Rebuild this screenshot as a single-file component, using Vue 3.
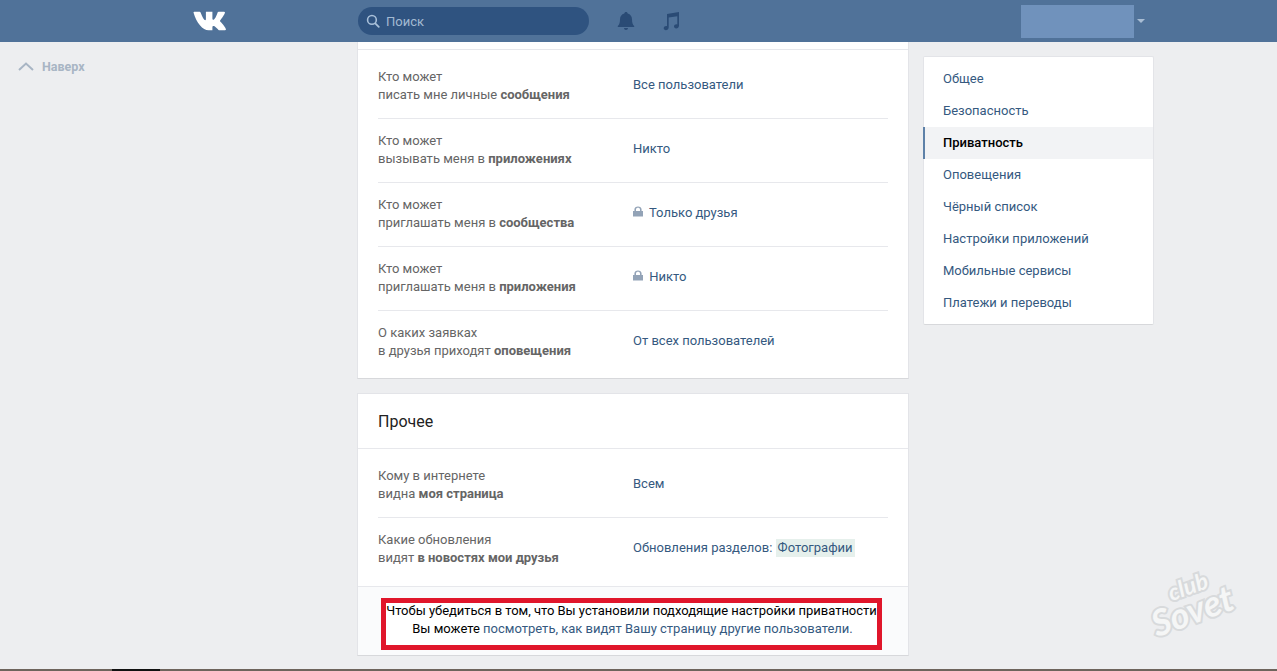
<template>
  <div class="page">
    <header class="topbar">
      <div class="logo-col">
        <svg class="logo" viewBox="0 0 33 20" width="33" height="20">
          <path fill="#fff" d="M0.5 1.5 C0.5 1 0.8 0.8 1.3 0.8 H6.6 C7.2 0.8 7.5 1.1 7.7 1.7 C9.3 6.2 11.2 9.2 12.3 9.2 C12.7 9.2 12.9 9 12.9 8.1 V0.8 H19.4 V7.6 C19.4 8.6 19.9 8.8 20.3 8.8 C21.4 8.8 23.4 5.6 24.6 1.5 C24.8 1 25.1 0.8 25.7 0.8 H31 C31.9 0.8 32.1 1.2 31.9 1.8 C31.2 4.6 27.3 9.3 27.3 9.3 C27 9.8 26.9 10.1 27.3 10.6 C27.8 11.2 32.2 15.6 32.9 18.2 C33.1 18.9 32.7 19.3 32 19.3 H26.5 C25.7 19.3 25.4 18.9 24.9 18.3 C23.6 16.9 21.8 14.9 20.6 14.9 C19.8 14.9 19.4 15.2 19.4 16.3 V19.3 H15.6 C9.8 19.3 3.4 12 0.5 1.5 Z" />
        </svg>
      </div>
      <div class="search">
        <svg viewBox="0 0 16 16" width="14" height="14">
          <circle cx="6.8" cy="6.8" r="5" fill="none" stroke="#a9c0d9" stroke-width="1.8" />
          <path d="M10.6 10.6 L14.6 14.6" stroke="#a9c0d9" stroke-width="2" stroke-linecap="round" />
        </svg>
        <span>Поиск</span>
      </div>
      <svg class="bell" viewBox="0 0 18 20" width="18" height="20">
        <path fill="#2a4b75" d="M9 1 C10 1 10.6 1.6 10.7 2.6 C13.5 3.3 15 5.6 15 8.5 C15 12 15.8 13.6 17.2 15 V16 H0.8 V15 C2.2 13.6 3 12 3 8.5 C3 5.6 4.5 3.3 7.3 2.6 C7.4 1.6 8 1 9 1 Z M7 17 H11 C11 18.2 10.1 19 9 19 C7.9 19 7 18.2 7 17 Z" />
      </svg>
      <svg class="note" viewBox="0 0 18 20" width="18" height="20">
        <path fill="#2a4b75" d="M5 3 L17 1 V14.8 C17 16.4 15.6 17.4 14.2 17.4 C12.9 17.4 12 16.6 12 15.5 C12 14.2 13.2 13.3 14.6 13.3 C14.9 13.3 15.1 13.3 15.3 13.4 V5.2 L6.7 6.6 V16.6 C6.7 18.2 5.3 19.2 3.9 19.2 C2.6 19.2 1.7 18.4 1.7 17.3 C1.7 16 2.9 15.1 4.3 15.1 C4.6 15.1 4.8 15.1 5 15.2 Z" />
      </svg>
      <div class="spacer"></div>
      <div class="avatar"></div>
      <span class="caret"></span>
    </header>

    <div class="columns">
      <div class="left-col">
        <a class="to-top">
          <svg viewBox="0 0 16 9" width="16" height="9">
            <path d="M1 8 L8 1.5 L15 8" fill="none" stroke="#a8b5c4" stroke-width="2" />
          </svg>
          <span>Наверх</span>
        </a>
      </div>

      <main class="main-col">
        <section class="card first-card">
          <div class="card-top"></div>
          <div v-for="row in firstRows" :key="row.value" class="row">
            <div class="row-label">
              {{ row.line1 }}<br />{{ row.line2 }} <b>{{ row.bold }}</b>
            </div>
            <div class="row-value">
              <svg v-if="row.locked" class="lock" viewBox="0 0 10 11" width="10" height="11">
                <path fill="#93a3b7" d="M0 5 H1.4 V3.6 C1.4 1.6 3 0.4 5 0.4 C7 0.4 8.6 1.6 8.6 3.6 V5 H10 V10.5 H0 Z M3 5 H7 V3.6 C7 2.4 6.1 1.8 5 1.8 C3.9 1.8 3 2.4 3 3.6 Z" />
              </svg>
              {{ row.value }}
            </div>
          </div>
        </section>

        <section class="card second-card">
          <h2 class="card-title">Прочее</h2>
          <div class="row">
            <div class="row-label">Кому в интернете<br />видна <b>моя страница</b></div>
            <div class="row-value">Всем</div>
          </div>
          <div class="row">
            <div class="row-label">Какие обновления<br />видят <b>в новостях мои друзья</b></div>
            <div class="row-value">Обновления разделов: <span class="tag">Фотографии</span></div>
          </div>
          <footer class="card-footer">
            <div class="red-box">
              <div class="red-line first">Чтобы убедиться в том, что Вы установили подходящие настройки приватности</div>
              <div class="red-line second">Вы можете <a>посмотреть, как видят Вашу страницу другие пользователи.</a></div>
            </div>
          </footer>
        </section>
      </main>

      <nav class="side-menu">
        <a v-for="item in menu" :key="item" :class="['menu-item', { active: item === 'Приватность' }]">{{ item }}</a>
      </nav>
    </div>

    <div class="watermark">
      <span class="wm-club">club</span>
      <span class="wm-sovet">Sovet</span>
    </div>
    <div class="bottom-line"></div>
    <div class="bottom-tab"></div>
  </div>
</template>

<script setup>
const firstRows = [
  { line1: "Кто может", line2: "писать мне личные", bold: "сообщения", value: "Все пользователи" },
  { line1: "Кто может", line2: "вызывать меня в", bold: "приложениях", value: "Никто" },
  { line1: "Кто может", line2: "приглашать меня в", bold: "сообщества", value: "Только друзья", locked: true },
  { line1: "Кто может", line2: "приглашать меня в", bold: "приложения", value: "Никто ", locked: true },
  { line1: "О каких заявках", line2: "в друзья приходят", bold: "оповещения", value: "От всех пользователей" },
];

const menu = [
  "Общее",
  "Безопасность",
  "Приватность",
  "Оповещения",
  "Чёрный список",
  "Настройки приложений",
  "Мобильные сервисы",
  "Платежи и переводы",
];
</script>

<style>
html,
body {
  margin: 0;
  background: #edeef0;
  overflow: hidden;
}
</style>

<style scoped>
.page {
  position: relative;
  height: 671px;
  overflow: hidden;
  background: #edeef0;
  font-family: Roboto, "Liberation Sans", sans-serif;
  font-size: 13px;
  color: #000;
}

.topbar {
  display: flex;
  align-items: center;
  height: 42px;
  background: #507299;
}

.logo-col {
  width: 358px;
  padding-left: 193px;
  box-sizing: border-box;
  display: flex;
}

.search {
  display: flex;
  align-items: center;
  gap: 6px;
  width: 231px;
  height: 28px;
  margin-top: -1px;
  padding-left: 8px;
  box-sizing: border-box;
  border-radius: 14px;
  background: #2f5380;
  color: #a3bad2;
}

.search span {
  position: relative;
  top: 1px;
}

.bell {
  margin-left: 28px;
}

.note {
  margin-left: 27px;
}

.spacer {
  flex: 1;
}

.avatar {
  width: 113px;
  height: 33px;
  background: #7092bc;
}

.caret {
  width: 0;
  height: 0;
  margin: 0 132px 0 3px;
  border: 4px solid transparent;
  border-top-color: #a9bdd4;
  border-bottom: 0;
}

.columns {
  display: flex;
  align-items: flex-start;
}

.left-col {
  width: 357px;
  flex-shrink: 0;
}

.to-top {
  display: flex;
  align-items: center;
  gap: 8px;
  margin: 17px 0 0 18px;
  font-weight: 700;
  font-size: 12.5px;
  line-height: 15px;
  color: #a8b5c4;
}

.main-col {
  width: 552px;
  flex-shrink: 0;
}

.card {
  background: #fff;
  border: 1px solid #e3e4e8;
  border-top: 0;
  border-bottom-color: #d7d8db;
  box-sizing: border-box;
}

.first-card {
  height: 337px;
  margin-bottom: 14px;
  padding: 0 20px;
}

.card-top {
  height: 7px;
  margin: 0 -20px;
  border-bottom: 1px solid #e7e8ec;
}

.second-card {
  height: 263px;
  border-top: 1px solid #e3e4e8;
}

.row {
  display: flex;
  align-items: center;
  height: 64px;
  box-sizing: border-box;
  padding-bottom: 1px;
  border-bottom: 1px solid #e7e8ec;
}

.first-card .card-top + .row {
  height: 69px;
  padding-top: 4px;
}

.first-card .row:last-child {
  padding-bottom: 2px;
  border-bottom: 0;
}

.second-card .row {
  height: 69px;
  margin: 0 20px;
  padding-top: 4px;
  padding-bottom: 0;
}

.second-card .card-title + .row + .row {
  height: 68px;
  padding-top: 0;
  padding-bottom: 6px;
  border-bottom: 0;
}

.row-label {
  width: 255px;
  flex-shrink: 0;
  line-height: 18px;
  color: #656565;
}

.row-label b {
  font-weight: 700;
}

.row-value {
  margin-top: -2px;
  color: #35597f;
  line-height: 18px;
}

.lock {
  margin-right: 3px;
}

.tag {
  display: inline-block;
  padding: 0 2px;
  background: #e6f0ec;
}

.card-title {
  margin: 0;
  height: 54px;
  border-bottom: 1px solid #e7e8ec;
  padding-left: 20px;
  font-size: 16px;
  font-weight: 400;
  line-height: 55px;
  color: #222;
}

.card-footer {
  display: flex;
  justify-content: center;
  height: 69px;
  padding: 11px 3px 0 0;
  box-sizing: border-box;
  border-top: 1px solid #e7e8ec;
  background: #fafbfc;
}

.red-box {
  width: 501px;
  height: 52px;
  padding-top: 0;
  box-sizing: border-box;
  border: 5px solid #e0162b;
  background: #fff;
  text-align: center;
  line-height: 18px;
  white-space: nowrap;
  color: #000;
}

.red-line.first {
  margin-top: -1px;
  letter-spacing: -0.03px;
}

.red-line.second {
  padding-left: 2px;
}

.red-box a {
  color: #35597f;
}

.side-menu {
  display: flex;
  flex-direction: column;
  width: 231px;
  height: 269px;
  margin: 14px 0 0 14px;
  padding: 6px 0;
  box-sizing: border-box;
  background: #fff;
  border: 1px solid #e3e4e8;
  border-bottom-color: #d7d8db;
  border-radius: 2px;
}

.menu-item {
  height: 32px;
  padding-left: 19px;
  line-height: 32px;
  color: #35597f;
}

.menu-item.active {
  margin-left: -1px;
  padding-left: 18px;
  border-left: 2px solid #5e81a8;
  background: #f2f3f5;
  color: #000;
  font-weight: 500;
}

.watermark {
  position: absolute;
  left: 1148px;
  top: 572px;
  width: 96px;
  height: 64px;
  transform: rotate(-20deg);
  font-family: Lato, "Liberation Sans", sans-serif;
  font-style: italic;
  font-weight: 700;
  color: #f5f6f6;
  -webkit-text-stroke: 4px #d8dadc;
  paint-order: stroke fill;
  pointer-events: none;
}

.wm-club {
  position: absolute;
  left: 26px;
  top: -2px;
  font-size: 23px;
}

.wm-sovet {
  position: absolute;
  left: 0;
  top: 14px;
  font-size: 36px;
}

.bottom-line {
  position: absolute;
  left: 0;
  right: 0;
  bottom: 0;
  height: 2px;
  background: #6e645c;
}

.bottom-tab {
  position: absolute;
  left: 112px;
  bottom: 0;
  width: 48px;
  height: 2px;
  background: #111;
}
</style>
